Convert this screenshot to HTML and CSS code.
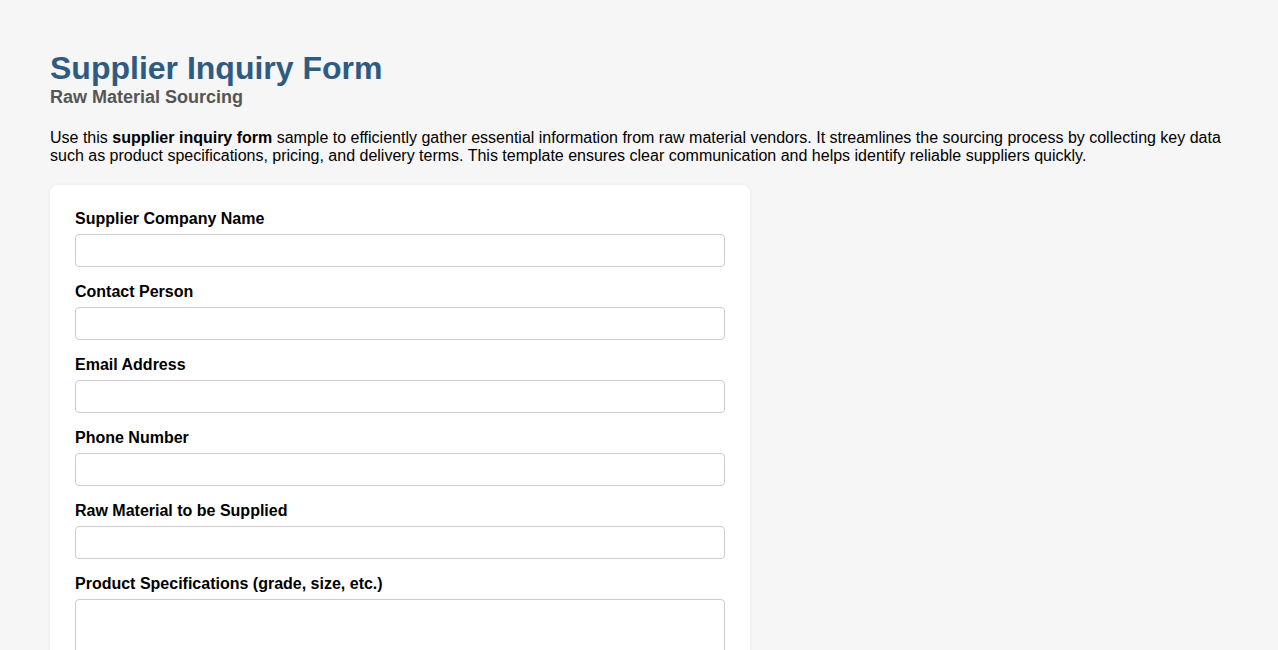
FILE: index.html
```html
<!DOCTYPE html>
<html lang="en">
<head>
<meta charset="utf-8">
<title>Supplier Inquiry Form</title>
<link rel="stylesheet" href="styles.css">
</head>
<body>
<main class="page">
  <h1 class="title">Supplier Inquiry Form</h1>
  <h2 class="subtitle">Raw Material Sourcing</h2>
  <p class="intro">Use this <strong>supplier inquiry form</strong> sample to efficiently gather essential information from raw material vendors. It streamlines the sourcing process by collecting key data such as product specifications, pricing, and delivery terms. This template ensures clear communication and helps identify reliable suppliers quickly.</p>
  <form class="card">
    <div class="group">
      <label class="label" for="company">Supplier Company Name</label>
      <input class="field" id="company" type="text">
    </div>
    <div class="group">
      <label class="label" for="contact">Contact Person</label>
      <input class="field" id="contact" type="text">
    </div>
    <div class="group">
      <label class="label" for="email">Email Address</label>
      <input class="field" id="email" type="email">
    </div>
    <div class="group">
      <label class="label" for="phone">Phone Number</label>
      <input class="field" id="phone" type="tel">
    </div>
    <div class="group">
      <label class="label" for="material">Raw Material to be Supplied</label>
      <input class="field" id="material" type="text">
    </div>
    <div class="group">
      <label class="label" for="specs">Product Specifications (grade, size, etc.)</label>
      <textarea class="field area" id="specs"></textarea>
    </div>
  </form>
</main>
</body>
</html>
```

FILE: styles.css
```css
html, body {
  margin: 0;
  padding: 0;
  background: #f6f6f6;
}
body {
  font-family: "Liberation Sans", Arial, sans-serif;
  color: #000;
}
.page {
  padding: 50px 50px 40px;
}
.title {
  margin: 0;
  font-size: 32px;
  font-weight: bold;
  color: #2e5b82;
}
.subtitle {
  margin: 0 0 21px;
  font-size: 18px;
  font-weight: bold;
  color: #555;
}
.intro {
  margin: 0 0 20px;
  font-size: 16px;
  line-height: 18px;
}
.card {
  width: 700px;
  box-sizing: border-box;
  background: #fff;
  border-radius: 8px;
  padding: 25px;
  box-shadow: 0 0 4px rgba(0, 0, 0, 0.05);
}
.group {
  margin-bottom: 16px;
}
.label {
  display: block;
  font-size: 16px;
  line-height: 18px;
  font-weight: bold;
  margin-bottom: 6px;
}
.field {
  display: block;
  width: 100%;
  height: 33px;
  box-sizing: border-box;
  border: 1px solid #ccc;
  border-radius: 4px;
  padding: 6px 8px;
  font: 16px "Liberation Sans", Arial, sans-serif;
  background: #fff;
}
.area {
  height: 90px;
  resize: vertical;
}
```
